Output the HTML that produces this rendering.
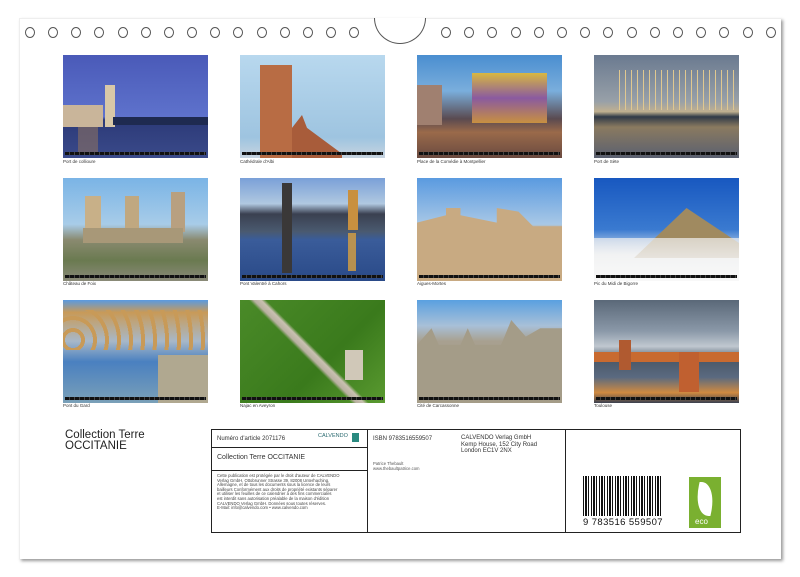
<!DOCTYPE html>
<html><head><meta charset="utf-8"><style>
*{margin:0;padding:0;box-sizing:border-box}
body{width:800px;height:577px;background:#fff;position:relative;overflow:hidden;font-family:"Liberation Sans",sans-serif}
.card{position:absolute;left:19px;top:18px;width:762px;height:541px;background:#fff;box-shadow:2px 2px 3px #999;border-left:1px solid #eee;border-top:1px solid #eee}
.hole{position:absolute;top:27px;width:10px;height:11px;border:1.3px solid #555;border-radius:50%}
.notch{position:absolute;left:374px;top:18px;width:52px;height:26px;border:1.3px solid #555;border-top:none;border-radius:0 0 26px 26px;background:#fff}
.ph{position:absolute;width:145px;height:103px;overflow:hidden}
.ph .bar{position:absolute;left:2px;right:2px;bottom:3px;height:3px;background:repeating-linear-gradient(90deg,#111 0 4px,#444 4px 5px)}
.cap{position:absolute;font-size:4.5px;color:#333}
.tbl{position:absolute;left:211px;top:429px;width:530px;height:104px;border:1px solid #222}
.v{position:absolute;top:0;bottom:0;width:1px;background:#222}
.h{position:absolute;height:1px;background:#222}
.t{position:absolute;color:#333;white-space:nowrap}
</style></head><body>
<div class="card"></div>
<div id="holes"></div>
<div class="notch"></div>

<div class="ph" style="left:63px;top:55px;background:linear-gradient(180deg,#4a5ab8 0%,#5e72cc 60%,#2c3a78 63%,#3a4a8a 100%)">
 <div style="position:absolute;left:0;top:50px;width:40px;height:22px;background:#c9b59a"></div>
 <div style="position:absolute;left:42px;top:30px;width:10px;height:42px;background:#d8c8a8"></div>
 <div style="position:absolute;left:50px;top:62px;width:95px;height:8px;background:#1e2a50"></div>
 <div style="position:absolute;left:15px;top:72px;width:20px;height:25px;background:#8a7060;opacity:.6"></div>
 <div class="bar"></div></div>
<div class="ph" style="left:240px;top:55px;background:linear-gradient(180deg,#b8d8ee,#9ec4e0 80%,#c8d4e0)">
 <div style="position:absolute;left:20px;top:10px;width:32px;height:93px;background:#b86c44"></div>
 <div style="position:absolute;left:52px;top:60px;width:50px;height:43px;background:#a85c3a;clip-path:polygon(0 30%,20% 0,30% 30%,100% 90%,100% 100%,0 100%)"></div>
 <div class="bar"></div></div>
<div class="ph" style="left:417px;top:55px;background:linear-gradient(180deg,#4a8ed0 0%,#7aaedc 35%,#5a4a50 62%,#9a6a4a 75%,#6a4a40 100%)">
 <div style="position:absolute;left:55px;top:18px;width:75px;height:50px;background:linear-gradient(180deg,#d8b840,#8a5aa0 50%,#c89040)"></div>
 <div style="position:absolute;left:0;top:30px;width:25px;height:40px;background:#a08070"></div>
 <div class="bar"></div></div>
<div class="ph" style="left:594px;top:55px;background:linear-gradient(180deg,#6a7a90 0%,#98a0a8 45%,#c0b090 55%,#303a48 60%,#8a7a60 70%,#5a6070 100%)">
 <div style="position:absolute;left:20px;top:15px;width:125px;height:40px;background:repeating-linear-gradient(90deg,transparent 0 5px,#e0c890 5px 6px)"></div>
 <div class="bar"></div></div>

<div class="ph" style="left:63px;top:178px;background:linear-gradient(180deg,#7ab4e6 0%,#a8cce8 45%,#8a8a70 60%,#6a7a50 80%,#8a8a78 100%)">
 <div style="position:absolute;left:22px;top:18px;width:16px;height:42px;background:#c8b088"></div>
 <div style="position:absolute;left:62px;top:18px;width:14px;height:38px;background:#c0a880"></div>
 <div style="position:absolute;left:108px;top:14px;width:14px;height:40px;background:#b8a080"></div>
 <div style="position:absolute;left:20px;top:50px;width:100px;height:15px;background:#a89878"></div>
 <div class="bar"></div></div>
<div class="ph" style="left:240px;top:178px;background:linear-gradient(180deg,#7aa0d8 0%,#b0c8e0 25%,#3a4050 35%,#4a5a70 52%,#3a5c9a 60%,#2a4a88 100%)">
 <div style="position:absolute;left:42px;top:5px;width:10px;height:90px;background:#3a3838"></div>
 <div style="position:absolute;left:108px;top:12px;width:10px;height:40px;background:#c89040"></div>
 <div style="position:absolute;left:108px;top:55px;width:8px;height:38px;background:#d8a040;opacity:.8"></div>
 <div class="bar"></div></div>
<div class="ph" style="left:417px;top:178px;background:linear-gradient(180deg,#5a9ae0 0%,#a8c8e6 45%,#c8a880 50%,#c4a47c 100%)">
 <div style="position:absolute;left:0;top:30px;width:145px;height:73px;background:#c8aa82;clip-path:polygon(0 20%,20% 10%,20% 0,30% 0,30% 10%,55% 20%,55% 0,70% 5%,80% 25%,100% 25%,100% 100%,0 100%)"></div>
 <div class="bar"></div></div>
<div class="ph" style="left:594px;top:178px;background:linear-gradient(180deg,#1858c0 0%,#3a7ad0 50%,#e8ecf0 75%,#f8f8f8 100%)">
 <div style="position:absolute;left:40px;top:30px;width:105px;height:50px;background:#a08a60;clip-path:polygon(0 100%,50% 0,100% 70%,100% 100%)"></div>
 <div style="position:absolute;left:0;top:60px;width:145px;height:43px;background:linear-gradient(180deg,rgba(240,240,240,.7),#f8f8f8)"></div>
 <div class="bar"></div></div>

<div class="ph" style="left:63px;top:300px;background:linear-gradient(180deg,#5a9ae0 0%,#c89a58 12%,#a8b8c8 40%,#4a80c0 60%,#7aa0b8 100%)">
 <div style="position:absolute;left:0;top:10px;width:145px;height:40px;background:repeating-radial-gradient(circle at 10px 30px,transparent 0 8px,#c89a58 8px 12px)"></div>
 <div style="position:absolute;left:95px;top:55px;width:50px;height:48px;background:#b0a890"></div>
 <div class="bar"></div></div>
<div class="ph" style="left:240px;top:300px;background:linear-gradient(135deg,#4a8a28,#3a7a1c 60%,#5a9a30)">
 <div style="position:absolute;left:0;top:0;width:145px;height:103px;background:linear-gradient(45deg,transparent 45%,#b8b0a0 47%,#c8c0b0 50%,transparent 52%)"></div>
 <div style="position:absolute;left:105px;top:50px;width:18px;height:30px;background:#d0c8b8"></div>
 <div class="bar"></div></div>
<div class="ph" style="left:417px;top:300px;background:linear-gradient(180deg,#5aa0e0 0%,#a8c0d8 25%,#a8a090 40%,#9a9484 100%)">
 <div style="position:absolute;left:0;top:20px;width:145px;height:83px;background:#a49c88;clip-path:polygon(0 30%,10% 10%,15% 30%,30% 30%,35% 10%,40% 30%,58% 30%,65% 0,75% 20%,85% 10%,100% 10%,100% 100%,0 100%)"></div>
 <div class="bar"></div></div>
<div class="ph" style="left:594px;top:300px;background:linear-gradient(180deg,#5a6878 0%,#8a98a8 30%,#c0c8d0 45%,#4a5868 58%,#5a6a80 75%,#d08a40 90%,#3a4050 100%)">
 <div style="position:absolute;left:0;top:52px;width:145px;height:10px;background:#c86a30"></div>
 <div style="position:absolute;left:85px;top:52px;width:20px;height:40px;background:#c06030"></div>
 <div style="position:absolute;left:25px;top:40px;width:12px;height:30px;background:#b05a30"></div>
 <div class="bar"></div></div>

<div class="cap" style="left:63px;top:159px">Port de collioure</div>
<div class="cap" style="left:240px;top:159px">Cathédrale d'Albi</div>
<div class="cap" style="left:417px;top:159px">Place de la Comédie à Montpellier</div>
<div class="cap" style="left:594px;top:159px">Port de Sète</div>
<div class="cap" style="left:63px;top:281px">Château de Foix</div>
<div class="cap" style="left:240px;top:281px">Pont Valentré à Cahors</div>
<div class="cap" style="left:417px;top:281px">Aigues-Mortes</div>
<div class="cap" style="left:594px;top:281px">Pic du Midi de Bigorre</div>
<div class="cap" style="left:63px;top:403px">Pont du Gard</div>
<div class="cap" style="left:240px;top:403px">Najac en Aveyron</div>
<div class="cap" style="left:417px;top:403px">Cité de Carcassonne</div>
<div class="cap" style="left:594px;top:403px">Toulouse</div>

<div class="t" style="left:65px;top:430px;font-size:11.5px;line-height:11px;color:#222">Collection Terre<br>OCCITANIE</div>

<div class="tbl">
 <div class="v" style="left:155px"></div>
 <div class="v" style="left:353px"></div>
 <div class="h" style="left:0;width:155px;top:17px"></div>
 <div class="h" style="left:0;width:155px;top:40px"></div>
 <div class="t" style="left:5px;top:6px;font-size:6px">Numéro d'article 2071176</div>
 <div class="t" style="left:106px;top:3px;font-size:5.5px;color:#2a6a70">CALVENDO</div>
 <div style="position:absolute;left:140px;top:3px;width:7px;height:9px;background:#2a8a80"></div>
 <div class="t" style="left:5px;top:24px;font-size:7px">Collection Terre OCCITANIE</div>
 <div class="t" style="left:5px;top:44px;font-size:4.2px;line-height:4.6px;color:#444">Cette publication est protégée par le droit d'auteur de CALVENDO<br>Verlag GmbH, Ottobrunner Strasse 39, 82008 Unterhaching,<br>Allemagne, et de tous les documents sous la licence de leurs<br>bailleurs Conformément aux droits de propriété existants séparer<br>et utiliser les feuilles de ce calendrier à des fins commerciales<br>est interdit sans autorisation préalable de la maison d'édition<br>CALVENDO Verlag GmbH. Données sous toutes réserves.<br>E-Mail: info@calvendo.com • www.calvendo.com</div>
 <div class="t" style="left:161px;top:6px;font-size:6px">ISBN 9783516559507</div>
 <div class="t" style="left:249px;top:5px;font-size:6px;line-height:6.5px">CALVENDO Verlag GmbH<br>Kemp House, 152 City Road<br>London EC1V 2NX</div>
 <div class="t" style="left:161px;top:32px;font-size:4.2px;line-height:4.6px;color:#555">Patrice Thebault<br>www.thebaultpatrice.com</div>
 <div style="position:absolute;left:371px;top:46px;width:80px;height:44px;background:repeating-linear-gradient(90deg,#111 0 1px,#fff 1px 2px,#111 2px 4px,#fff 4px 5px,#111 5px 6px,#fff 6px 8px)"></div>
 <div style="position:absolute;left:371px;top:86px;width:82px;height:10px;background:#fff"></div>
 <div class="t" style="left:371px;top:87px;font-size:9.5px;color:#111;letter-spacing:.4px">9 783516 559507</div>
 <div style="position:absolute;left:477px;top:47px;width:32px;height:51px;background:#7ab030"></div>
 <div style="position:absolute;left:484px;top:52px;width:18px;height:34px;background:#fff;border-radius:0 90% 0 90%;transform:skewX(-12deg)"></div>
 <div class="t" style="left:483px;top:87px;font-size:8px;color:#fff">eco</div>
</div>
<script>
var h=document.getElementById('holes'),s='';
for(var i=0;i<15;i++){s+='<div class="hole" style="left:'+(25+i*23.15)+'px"></div>';s+='<div class="hole" style="left:'+(441+i*23.2)+'px"></div>';}
h.innerHTML=s;
</script>
</body></html>
